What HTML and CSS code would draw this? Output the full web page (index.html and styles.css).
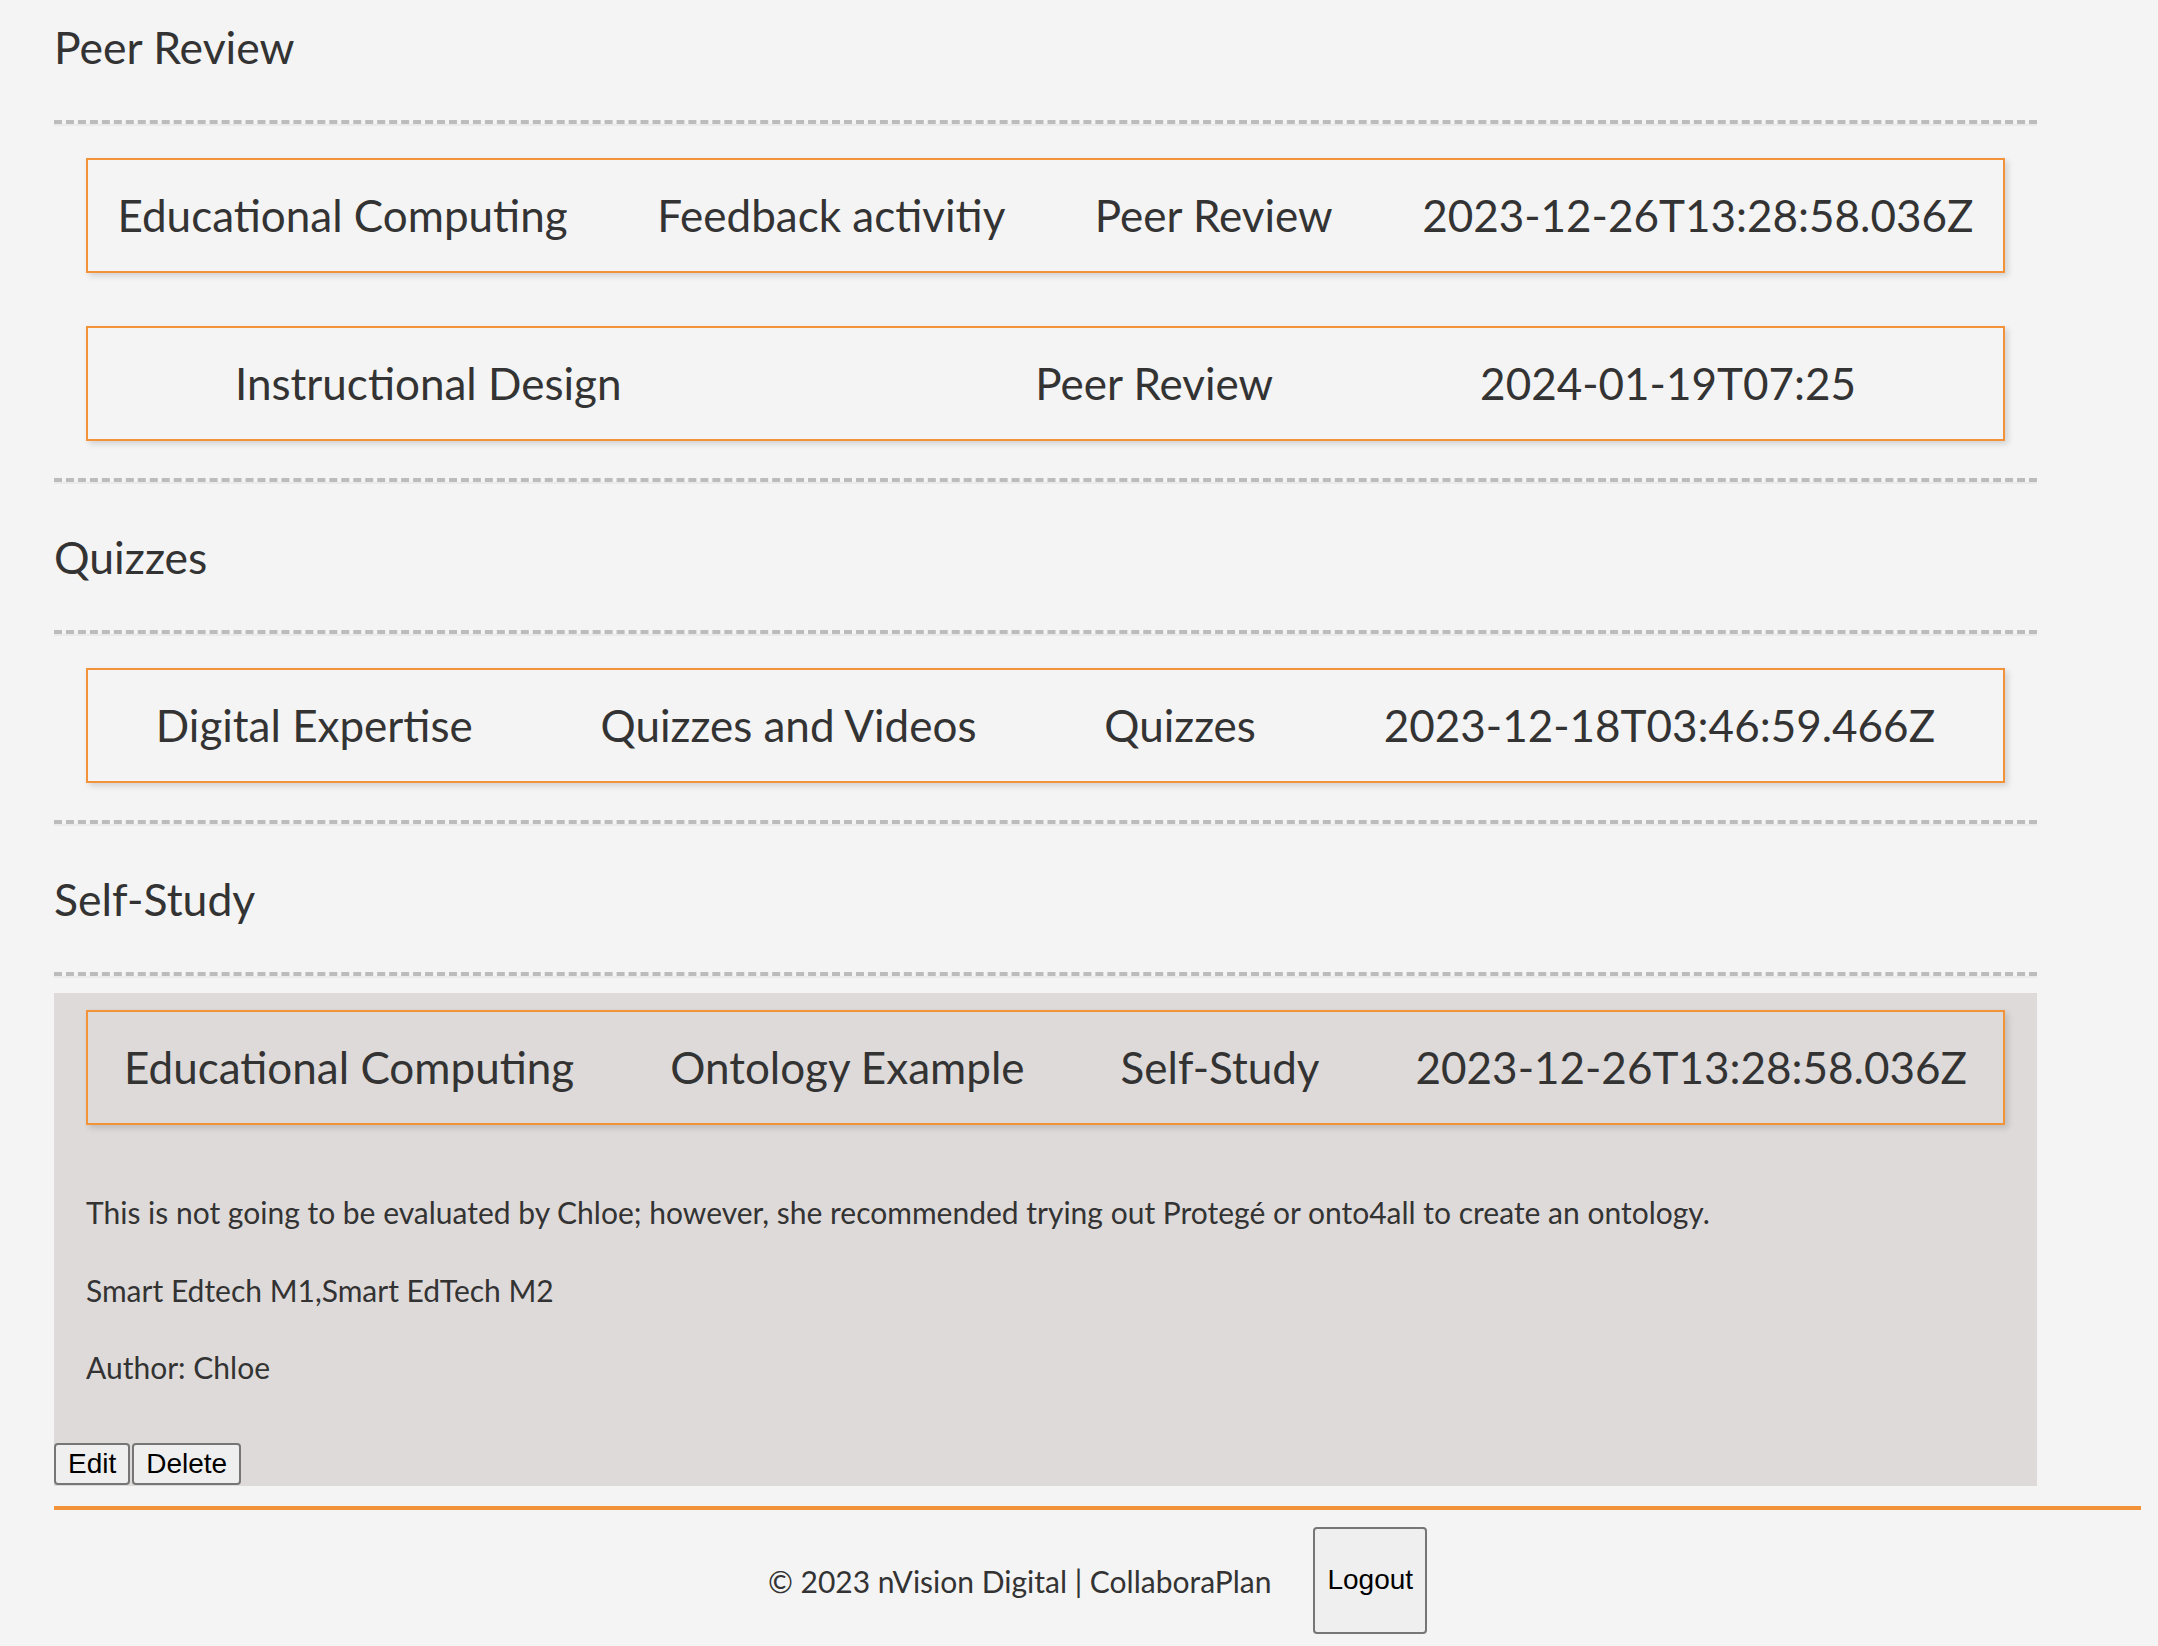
FILE: index.html
```html
<!DOCTYPE html>
<html lang="en">
<head>
<meta charset="utf-8">
<title>CollaboraPlan</title>
<link rel="stylesheet" href="styles.css">
</head>
<body>
<div class="wrap">
  <main class="main">
    <section class="group first">
      <h2 class="group-title">Peer Review</h2>
      <div class="rule"></div>
      <div class="list">
        <div class="card">
          <div class="row">
            <span class="cell">Educational Computing</span>
            <span class="cell">Feedback activitiy</span>
            <span class="cell">Peer Review</span>
            <span class="cell">2023-12-26T13:28:58.036Z</span>
          </div>
        </div>
        <div class="card">
          <div class="row">
            <span class="cell">Instructional Design</span>
            <span class="cell"></span>
            <span class="cell">Peer Review</span>
            <span class="cell">2024-01-19T07:25</span>
          </div>
        </div>
      </div>
      <div class="rule"></div>
    </section>

    <section class="group">
      <h2 class="group-title">Quizzes</h2>
      <div class="rule"></div>
      <div class="list">
        <div class="card">
          <div class="row">
            <span class="cell">Digital Expertise</span>
            <span class="cell">Quizzes and Videos</span>
            <span class="cell">Quizzes</span>
            <span class="cell">2023-12-18T03:46:59.466Z</span>
          </div>
        </div>
      </div>
      <div class="rule"></div>
    </section>

    <section class="group">
      <h2 class="group-title">Self-Study</h2>
      <div class="rule"></div>
      <div class="panel">
        <div class="card">
          <div class="row">
            <span class="cell">Educational Computing</span>
            <span class="cell">Ontology Example</span>
            <span class="cell">Self-Study</span>
            <span class="cell">2023-12-26T13:28:58.036Z</span>
          </div>
        </div>
        <div class="details">
          <p class="detail">This is not going to be evaluated by Chloe; however, she recommended trying out Protegé or onto4all to create an ontology.</p>
          <p class="detail">Smart Edtech M1,Smart EdTech M2</p>
          <p class="detail">Author: Chloe</p>
        </div>
        <div class="actions">
          <button class="btn" type="button">Edit</button>
          <button class="btn" type="button">Delete</button>
        </div>
      </div>
    </section>
  </main>

  <footer class="footer">
    <p class="copy">© 2023 nVision Digital | CollaboraPlan</p>
    <button class="btn logout" type="button">Logout</button>
  </footer>
</div>
</body>
</html>
```

FILE: styles.css
```css
html, body {
  margin: 0;
  padding: 0;
}

body {
  background: #f4f4f4;
  color: #333333;
  font-family: "Lato", "Noto Sans", sans-serif;
  font-weight: 400;
}

.wrap {
  margin-left: 54px;
  width: 2087px;
}

.main {
  width: 1983px;
  padding-top: 21px;
}

.group-title {
  margin: 47px 0 0;
  font-size: 44.5px;
  line-height: 52px;
  font-weight: 400;
}

.group.first .group-title {
  margin-top: 0;
}

.rule {
  height: 0;
  margin-top: 47px;
  border-top: 4px dashed #bcbcbc;
  border-bottom: 2px solid #eaeaea;
}

.list {
  display: flex;
  flex-direction: column;
  gap: 53px;
  padding: 32px 0 37px;
}

.list + .rule {
  margin-top: 0;
}

.card {
  margin: 0 32px;
  border: 2px solid #f29339;
  padding: 29px 0;
  box-shadow: 3px 3px 6px rgba(0, 0, 0, 0.14);
}

.row {
  display: flex;
  justify-content: space-evenly;
  margin: 0 -17px;
  font-size: 44px;
  line-height: 53px;
}

.cell {
  margin: 0 43px;
  white-space: nowrap;
}

.panel {
  margin-top: 15px;
  background: #dedad9;
  padding: 17px 0 1px;
}

.details {
  padding: 68px 32px 0;
}

.detail {
  margin: 0 0 39.5px;
  font-size: 30px;
  line-height: 38px;
}

.detail:last-child {
  margin-bottom: 0;
}

.actions {
  display: flex;
  gap: 2px;
  margin-top: 57px;
}

.btn {
  font-family: "Liberation Sans", Arial, sans-serif;
  font-weight: 400;
  font-size: 28px;
  line-height: 32px;
  color: #000000;
  background: #efefef;
  border: 2px solid #767676;
  border-radius: 4px;
  padding: 3px 12px;
  margin: 0;
}

.footer {
  margin-top: 20px;
  border-top: 4px solid #f29339;
  padding-top: 17px;
  display: flex;
  justify-content: center;
  align-items: center;
  gap: 42px;
}

.copy {
  margin: 0;
  font-size: 30px;
  line-height: 36px;
}

.logout {
  padding: 35px 12px 36px;
}
```
